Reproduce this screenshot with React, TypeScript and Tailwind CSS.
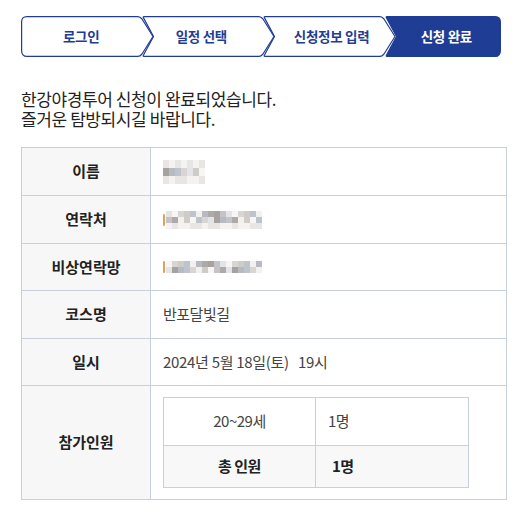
import React from "react";

const NAVY = "#1f3d94";

type Step = { label: string; pad: string; first?: boolean; last?: boolean; active?: boolean };

const steps: Step[] = [
  { label: "로그인", pad: "pr-[12px]", first: true },
  { label: "일정 선택", pad: "pr-[14px]" },
  { label: "신청정보 입력", pad: "pl-[4px]" },
  { label: "신청 완료", pad: "pl-[8px]", last: true, active: true },
];

function stepPath(first?: boolean, last?: boolean) {
  const w = last ? 116 : 133;
  const h = 41;
  const t = 0.6;
  const b = h - 0.6;
  const m = h / 2;
  const r = 6;
  let d = "";
  // left side
  if (first) {
    d += `M ${r} ${t} `;
  } else {
    d += `M 2 ${t} `;
  }
  // top + right side
  if (last) {
    d += `H ${w - r} Q ${w - t} ${t} ${w - t} ${r} V ${b - r} Q ${w - t} ${b} ${w - r} ${b} `;
  } else {
    d += `H ${w - 16} Q ${w - 14} ${t} ${w - 12} 3 L ${w - 1} ${m} L ${w - 12} ${b - 2.4} Q ${w - 14} ${b} ${w - 16} ${b} `;
  }
  // bottom + left side
  if (first) {
    d += `H ${r} Q ${t} ${b} ${t} ${b - r} V ${r} Q ${t} ${t} ${r} ${t} Z`;
  } else {
    d += `H 2 Q 0.6 ${b} 1.5 ${b - 1.4} L 11.5 ${m} L 1.5 1.9 Q 0.6 ${t} 2 ${t} Z`;
  }
  return { d, w };
}

function Steps() {
  return (
    <div className="flex h-[41px]">
      {steps.map((s, i) => {
        const { d, w } = stepPath(s.first, s.last);
        return (
          <div
            key={s.label}
            className={`relative flex h-[41px] items-center justify-center ${i > 0 ? "-ml-[11px]" : ""} ${s.last ? "w-[116px]" : "w-[133px]"}`}
          >
            <svg className="absolute inset-0" width={w} height={41} viewBox={`0 0 ${w} 41`}>
              <path
                d={d}
                fill={s.active ? NAVY : "#ffffff"}
                stroke={NAVY}
                strokeWidth={1.2}
                strokeLinejoin="round"
              />
            </svg>
            <span
              className={`relative text-[13.5px] font-bold tracking-[-0.3px] ${s.active ? "text-white" : "text-[#1f3d94]"} ${s.pad}`}
            >
              {s.label}
            </span>
          </div>
        );
      })}
    </div>
  );
}

const shades = [
  "bg-[#f3f1f0]",
  "bg-[#d8d5d4]",
  "bg-[#c4c4c8]",
  "bg-[#b8bac1]",
  "bg-[#cfcbc6]",
  "bg-[#e3e4e8]",
  "bg-[#aeaaa9]",
  "bg-[#bfc3cc]",
  "bg-[#f7f6f5]",
  "bg-[#a5a2a0]",
];

function Mosaic({ rows, cols, seed, cell }: { rows: number[]; cols: number; seed: number; cell: string }) {
  return (
    <div className="flex flex-col">
      {rows.map((row, r) => (
        <div key={r} className="flex">
          {Array.from({ length: cols }).map((_, c) => {
            const k = (seed + r * 7 + c * 3 + ((c * r) % 5)) % shades.length;
            const cls = row === 0 ? (k % 2 ? "bg-[#f4f3f2]" : "bg-[#e8e6e5]") : shades[k];
            return <div key={c} className={`${cell} ${cls}`} />;
          })}
        </div>
      ))}
    </div>
  );
}

function Row({ label, h, children }: { label: string; h: string; children: React.ReactNode }) {
  return (
    <tr className={h}>
      <th className="w-[129px] border border-[#c8cfe0] bg-[#f7f7f7] text-center text-[15px] font-bold text-[#222]">
        {label}
      </th>
      <td className="border border-[#c8cfe0] pl-[12px] text-[15px] text-[#444] tracking-[-0.5px]">
        {children}
      </td>
    </tr>
  );
}

export default function App() {
  return (
    <div
      className="min-h-[510px] bg-white px-[21px] pt-[16px]"
      style={{ fontFamily: '"Noto Sans CJK KR", "Noto Sans", sans-serif' }}
    >
      <Steps />

      <p className="mt-[32px] text-[17px] leading-[20px] tracking-[-0.4px] text-[#222]">
        한강야경투어 신청이 완료되었습니다.
        <br />
        즐거운 탐방되시길 바랍니다.
      </p>

      <table className="mt-[18px] w-[486px] border-collapse">
        <tbody>
          <Row label="이름" h="h-[48px]">
            <Mosaic rows={[0, 1, 0]} cols={7} seed={2} cell="h-[8px] w-[6px]" />
          </Row>
          <Row label="연락처" h="h-[48px]">
            <div className="flex items-center">
              <span className="mr-[1px] h-[12px] w-[2px] rounded-full bg-[#e0a060]" />
              <Mosaic rows={[1, 1, 0]} cols={16} seed={5} cell="h-[6px] w-[6px]" />
            </div>
          </Row>
          <Row label="비상연락망" h="h-[47px]">
            <div className="flex items-center">
              <span className="mr-[1px] h-[12px] w-[2px] rounded-full bg-[#e0a060]" />
              <Mosaic rows={[1, 1]} cols={16} seed={8} cell="h-[6px] w-[6px]" />
            </div>
          </Row>
          <Row label="코스명" h="h-[48px]">
            반포달빛길
          </Row>
          <Row label="일시" h="h-[47px]">
            <span className="tracking-[-0.3px]">2024년 5월 18일(토)&nbsp;&nbsp; 19시</span>
          </Row>
          <tr className="h-[114px]">
            <th className="w-[129px] border border-[#c8cfe0] bg-[#f7f7f7] text-center text-[15px] font-bold text-[#222]">
              참가인원
            </th>
            <td className="border border-[#c8cfe0] pl-[12px] align-middle">
              <table className="w-[306px] border-collapse text-[15px] tracking-[-0.5px]">
                <tbody>
                  <tr className="h-[48px]">
                    <td className="w-[152px] border border-[#c8cfe0] text-center text-[#444]">
                      20~29세
                    </td>
                    <td className="border border-[#c8cfe0] pl-[12px] text-[#444]">1명</td>
                  </tr>
                  <tr className="h-[42px] bg-[#f8f8f8]">
                    <td className="border border-[#c8cfe0] text-center font-bold text-[#222]">
                      총 인원
                    </td>
                    <td className="border border-[#c8cfe0] pl-[16px] font-bold text-[#222]">
                      1명
                    </td>
                  </tr>
                </tbody>
              </table>
            </td>
          </tr>
        </tbody>
      </table>
    </div>
  );
}
